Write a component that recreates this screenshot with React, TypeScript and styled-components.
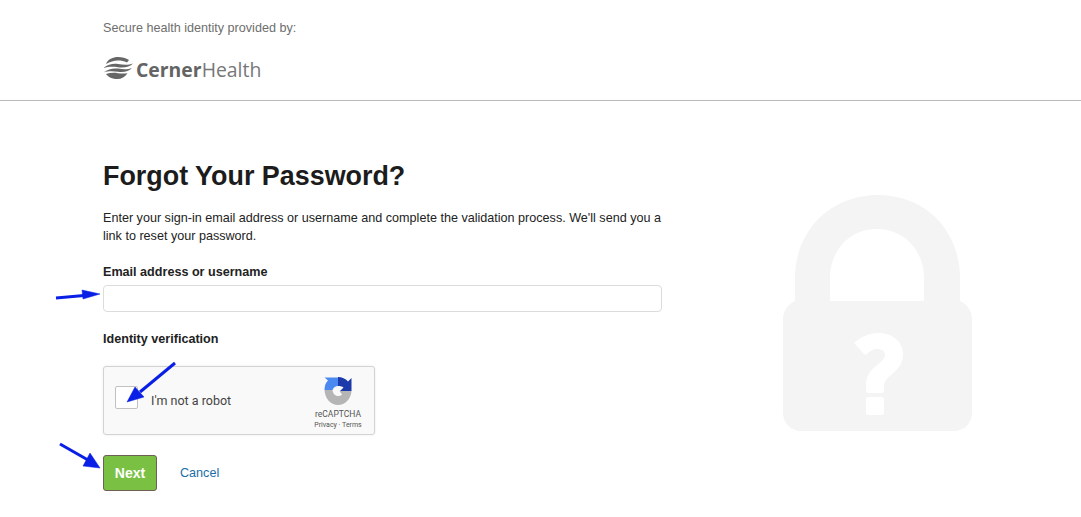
import React from "react";
import styled, { createGlobalStyle } from "styled-components";

const Global = createGlobalStyle`
  html, body { margin: 0; padding: 0; background: #fff; }
  body { font-family: "Liberation Sans", Arial, sans-serif; color: #1a1a1a; }
`;

const Page = styled.div`
  position: relative;
  width: 1081px;
  height: 517px;
  overflow: hidden;
`;

const Header = styled.header`
  box-sizing: border-box;
  height: 101px;
  padding: 20px 0 0 103px;
  border-bottom: 1px solid #b9b9b9;
`;

const Provided = styled.div`
  font-size: 12.6px;
  line-height: 16px;
  color: #6e6e6e;
`;

const Logo = styled.div`
  display: flex;
  align-items: center;
  gap: 3px;
  margin-top: 19px;
  height: 26px;
`;

const LogoText = styled.span`
  margin-top: 3px;
  font-family: "Open Sans", sans-serif;
  font-size: 19.4px;
  line-height: 26px;
  color: #777;
  b { font-weight: 700; color: #646464; }
`;

const Main = styled.main`
  display: flex;
  padding-left: 103px;
`;

const Form = styled.section`
  width: 559px;
  padding-top: 58px;
`;

const Title = styled.h1`
  margin: 0;
  font-size: 26.9px;
  line-height: 34px;
  font-weight: 700;
  color: #1c1c1c;
`;

const Intro = styled.p`
  margin: 16px 0 0;
  font-size: 12.6px;
  line-height: 18px;
  color: #222;
`;

const Label = styled.label`
  display: block;
  font-size: 12.6px;
  line-height: 16px;
  font-weight: 700;
  color: #222;
`;

const EmailLabel = styled(Label)`
  margin-top: 19px;
`;

const VerifyLabel = styled(Label)`
  margin-top: 19px;
`;

const Input = styled.input`
  display: block;
  box-sizing: border-box;
  width: 559px;
  height: 27px;
  margin-top: 5px;
  border: 1px solid #dcdcdc;
  border-radius: 4px;
  background: #fff;
  outline: none;
`;

const Captcha = styled.div`
  box-sizing: border-box;
  display: flex;
  align-items: center;
  width: 272px;
  height: 69px;
  margin-top: 19px;
  padding: 0 9px 0 11px;
  background: #f9f9f9;
  border: 1px solid #d3d3d3;
  border-radius: 3px;
  box-shadow: 0 0 3px rgba(0, 0, 0, 0.08);
  font-family: Roboto, sans-serif;
`;

const CheckBox = styled.div`
  box-sizing: border-box;
  width: 23px;
  height: 23px;
  margin-top: -6px;
  background: #fff;
  border: 1px solid #c1c1c1;
  border-radius: 2px;
`;

const RobotText = styled.span`
  margin-left: 13px;
  flex: 1;
  font-size: 12.5px;
  color: #444;
`;

const Badge = styled.div`
  display: flex;
  flex-direction: column;
  align-items: center;
  width: 54px;
  margin-top: 6px;
`;

const BadgeName = styled.span`
  margin-top: 4px;
  font-size: 8.5px;
  line-height: 11px;
  color: #555;
`;

const BadgeLinks = styled.span`
  font-size: 7px;
  line-height: 10px;
  color: #555;
  white-space: nowrap;
`;

const Actions = styled.div`
  display: flex;
  align-items: center;
  gap: 23px;
  margin-top: 20px;
`;

const NextButton = styled.button`
  box-sizing: border-box;
  width: 54px;
  height: 36px;
  padding: 0;
  border: 1px solid #6f5f55;
  border-radius: 3px;
  background: #7ac143;
  color: #fff;
  font-family: inherit;
  font-size: 14px;
  font-weight: 700;
`;

const CancelLink = styled.a`
  font-size: 12.6px;
  color: #1a6ea5;
  text-decoration: none;
`;

const LockWrap = styled.aside`
  margin: 93px 0 0 121px;
  line-height: 0;
`;

const ArrowLayer = styled.svg`
  position: absolute;
  inset: 0;
  pointer-events: none;
`;

const CernerMark = () => (
  <svg width="30" height="26" viewBox="0 0 30 26" fill="#666">
    <path d="M3 9C5 4 10 2 15 2 19 2 23 3 26 5L24 7.500C21 6 18 5.500 15 5.500 11 5.500 7 7 3 9Z" />
    <path d="M0.500 13C5 9.500 10 8.200 15 9 20 9.800 25 10.500 30 8.500 27 12 21 13 15 12.200 10 11.500 5 11.500 0.500 13Z" />
    <path d="M0.500 17.500C5 14 10 13 15 13.600 20 14.400 25 14.800 29 13 26 16.500 21 17.500 15 16.800 10 16.200 5 16 0.500 17.500Z" />
    <path d="M3 19C7 17.800 11 17.600 15 18.200 18 18.700 21 18.800 24.500 18.200 22 22 18.500 24 14.500 24 9.500 24 5 22 3 19Z" />
  </svg>
);

const RecaptchaIcon = () => (
  <svg width="28" height="28" viewBox="0 0 28 28">
    <path fill="#b5b5b5" d="M0.500 13 L8.500 13 C8.800 16.500 11 19 14 19 C15.500 19 17 18.500 18 17.500 L15.500 14 L27.500 14 C27 22 21 28 14 28 C6.500 28 1 21.500 0.500 13 Z" />
    <path fill="#4a8af0" d="M0.500 13 C0.500 8.500 1.800 5.500 4 3.500 L0.500 0.500 L14 0.500 L14 9 C11.500 9 9.800 10 8.500 13 Z" />
    <path fill="#1c3aa9" d="M14 0 C18 0 21.500 1.700 24 4.500 L27.500 1 L27.500 14 L16 14 L19.500 10.500 C18.500 9.500 16.500 9 14 9 Z" />
  </svg>
);

const LockIcon = () => (
  <svg width="190" height="237" viewBox="0 0 190 237">
    <path
      fill="#f4f4f4"
      fillRule="evenodd"
      d="M12 107 L12 84 C12 36 48 1 95 1 C142 1 177 36 177 84 L177 107 C184 110 189 117 189 125 L189 219 C189 229 181 237 171 237 L18 237 C8 237 0 229 0 219 L0 125 C0 117 5 110 12 107 Z M47 107 L141 107 L141 84 C141 56 121 35 94 35 C67 35 47 56 47 84 Z"
    />
    <path
      fill="#fff"
      d="M72 148 C78 143 86 139 95 139 C110 139 120 148 120 160 C120 170 115 175 108 181 C103 185 101 188 101 193 L101 197 C101 198 100 199 99 199 L85 199 C84 199 83 198 83 197 L83 191 C83 182 87 177 93 172 C98 168 102 165 102 161 C102 157 99 155 94 155 C90 155 87 157 84 160 C83 161 82 161 81 160 L72 150 C71 149 71 149 72 148 Z M85 203 L99 203 C100 203 101 204 101 205 L101 219 C101 220 100 221 99 221 L85 221 C84 221 83 220 83 219 L83 205 C83 204 84 203 85 203 Z"
    />
  </svg>
);

export default function App() {
  return (
    <Page>
      <Global />
      <Header>
        <Provided>Secure health identity provided by:</Provided>
        <Logo>
          <CernerMark />
          <LogoText>
            <b>Cerner</b>Health
          </LogoText>
        </Logo>
      </Header>
      <Main>
        <Form>
          <Title>Forgot Your Password?</Title>
          <Intro>
            Enter your sign-in email address or username and complete the validation process. We'll send you a link to
            reset your password.
          </Intro>
          <EmailLabel htmlFor="email">Email address or username</EmailLabel>
          <Input id="email" type="text" />
          <VerifyLabel>Identity verification</VerifyLabel>
          <Captcha>
            <CheckBox />
            <RobotText>I'm not a robot</RobotText>
            <Badge>
              <RecaptchaIcon />
              <BadgeName>reCAPTCHA</BadgeName>
              <BadgeLinks>Privacy · Terms</BadgeLinks>
            </Badge>
          </Captcha>
          <Actions>
            <NextButton type="button">Next</NextButton>
            <CancelLink href="#">Cancel</CancelLink>
          </Actions>
        </Form>
        <LockWrap>
          <LockIcon />
        </LockWrap>
      </Main>
      <ArrowLayer width="1081" height="517" viewBox="0 0 1081 517">
        <g fill="#0a1fe6" stroke="#0a1fe6">
          <path d="M56 298 L84 295.500" strokeWidth="3" fill="none" />
          <path d="M82 290 L100 294 L83 299 Z" strokeWidth="0.500" />
          <path d="M175 363 L140 392" strokeWidth="3" fill="none" />
          <path d="M135 387 L127 402 L144 397 Z" strokeWidth="0.500" />
          <path d="M60 444 L88 460" strokeWidth="3" fill="none" />
          <path d="M90 453 L100 468 L83 466 Z" strokeWidth="0.500" />
        </g>
      </ArrowLayer>
    </Page>
  );
}
